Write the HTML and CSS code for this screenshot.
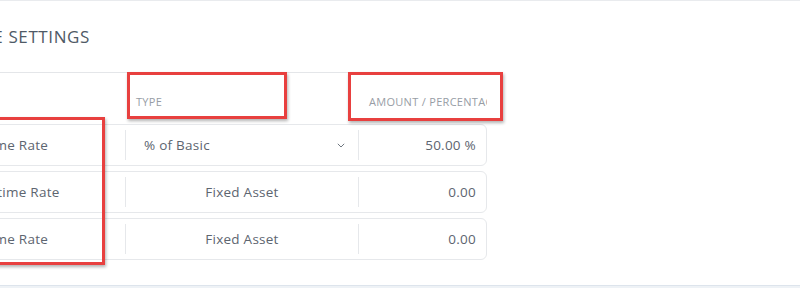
FILE: index.html
```html
<!DOCTYPE html>
<html>
<head>
<meta charset="utf-8">
<link rel="stylesheet" href="styles.css">
</head>
<body>
<div class="card">
  <h2 class="title">OVERTIME RATE SETTINGS</h2>
  <div class="table">
    <div class="thead">
      <div class="th th-name">NAME</div>
      <div class="th th-type">TYPE</div>
      <div class="th th-amount">AMOUNT / PERCENTAGE</div>
    </div>
    <div class="row">
      <div class="cell cell-name"><span class="name name-long">Regular Overtime Rate</span></div>
      <div class="cell cell-type cell-select"><span>% of Basic</span>
        <svg class="chev" width="8" height="5" viewBox="0 0 8 5"><path d="M0.8 0.8 L4 4 L7.2 0.8" fill="none" stroke="#6f7780" stroke-width="1"/></svg>
      </div>
      <div class="cell cell-amount">50.00 %</div>
    </div>
    <div class="row">
      <div class="cell cell-name"><span class="name name-short">Holiday Overtime Rate</span></div>
      <div class="cell cell-type">Fixed Asset</div>
      <div class="cell cell-amount">0.00</div>
    </div>
    <div class="row">
      <div class="cell cell-name"><span class="name name-long">Regular Overtime Rate</span></div>
      <div class="cell cell-type">Fixed Asset</div>
      <div class="cell cell-amount">0.00</div>
    </div>
  </div>
</div>
<div class="mark mark-type"></div>
<div class="mark mark-amount"></div>
<div class="mark mark-name"></div>
</body>
</html>
```
FILE: styles.css
```css
html, body {
  margin: 0;
  padding: 0;
  background: #eef2f6;
  font-family: "Open Sans", "Liberation Sans", sans-serif;
  overflow: hidden;
}
body {
  position: relative;
  width: 800px;
  height: 288px;
}
.card {
  margin-left: -300px;
  width: 1100px;
  height: 284px;
  background: #fff;
  border-top: 1px solid #e9ebee;
  border-bottom: 1px solid #dde4ec;
}
.title {
  margin: 0;
  height: 71px;
  display: flex;
  align-items: center;
  padding-left: 169px;
  font-size: 17px;
  font-weight: 400;
  color: #4f5a66;
  letter-spacing: 0.6px;
  box-sizing: border-box;
}
.table {
  width: 787px;
}
.thead {
  display: flex;
  height: 52px;
  border-top: 1px solid #e4e6e9;
  box-sizing: border-box;
}
.th {
  font-size: 11px;
  color: #979da5;
  padding-left: 11px;
  padding-top: 21px;
  letter-spacing: 0.3px;
  box-sizing: border-box;
  white-space: nowrap;
  overflow: hidden;
}
.th-name { width: 425px; }
.th-type { width: 233px; }
.th-amount { width: 129px; }
.row {
  display: flex;
  height: 42px;
  border: 1px solid #e6e8eb;
  border-radius: 6px;
  box-sizing: border-box;
  margin-bottom: 5px;
  font-size: 13.5px;
  letter-spacing: 0.25px;
  color: #5d6570;
}
.cell {
  display: flex;
  align-items: center;
  box-sizing: border-box;
  margin: 5px 0;
  white-space: nowrap;
}
.cell-name {
  width: 424px;
  padding-left: 200px;
  overflow: hidden;
}
.name-short { margin-left: 12px; }
.cell-type {
  width: 233px;
  border-left: 1px solid #e6e8eb;
  justify-content: center;
}
.cell-select {
  justify-content: space-between;
  padding-left: 18px;
  padding-right: 13px;
}
.cell-amount {
  flex: 1;
  border-left: 1px solid #e6e8eb;
  justify-content: flex-end;
  padding-right: 10px;
}
.mark {
  position: absolute;
  border: 3px solid #e8403f;
  box-shadow: 1px 2px 3px rgba(0,0,0,0.3);
  box-sizing: border-box;
}
.mark-type { left: 127px; top: 72px; width: 160px; height: 47px; }
.mark-amount { left: 348px; top: 72px; width: 155px; height: 49px; }
.mark-name { left: -10px; top: 117px; width: 115px; height: 148px; }
```
